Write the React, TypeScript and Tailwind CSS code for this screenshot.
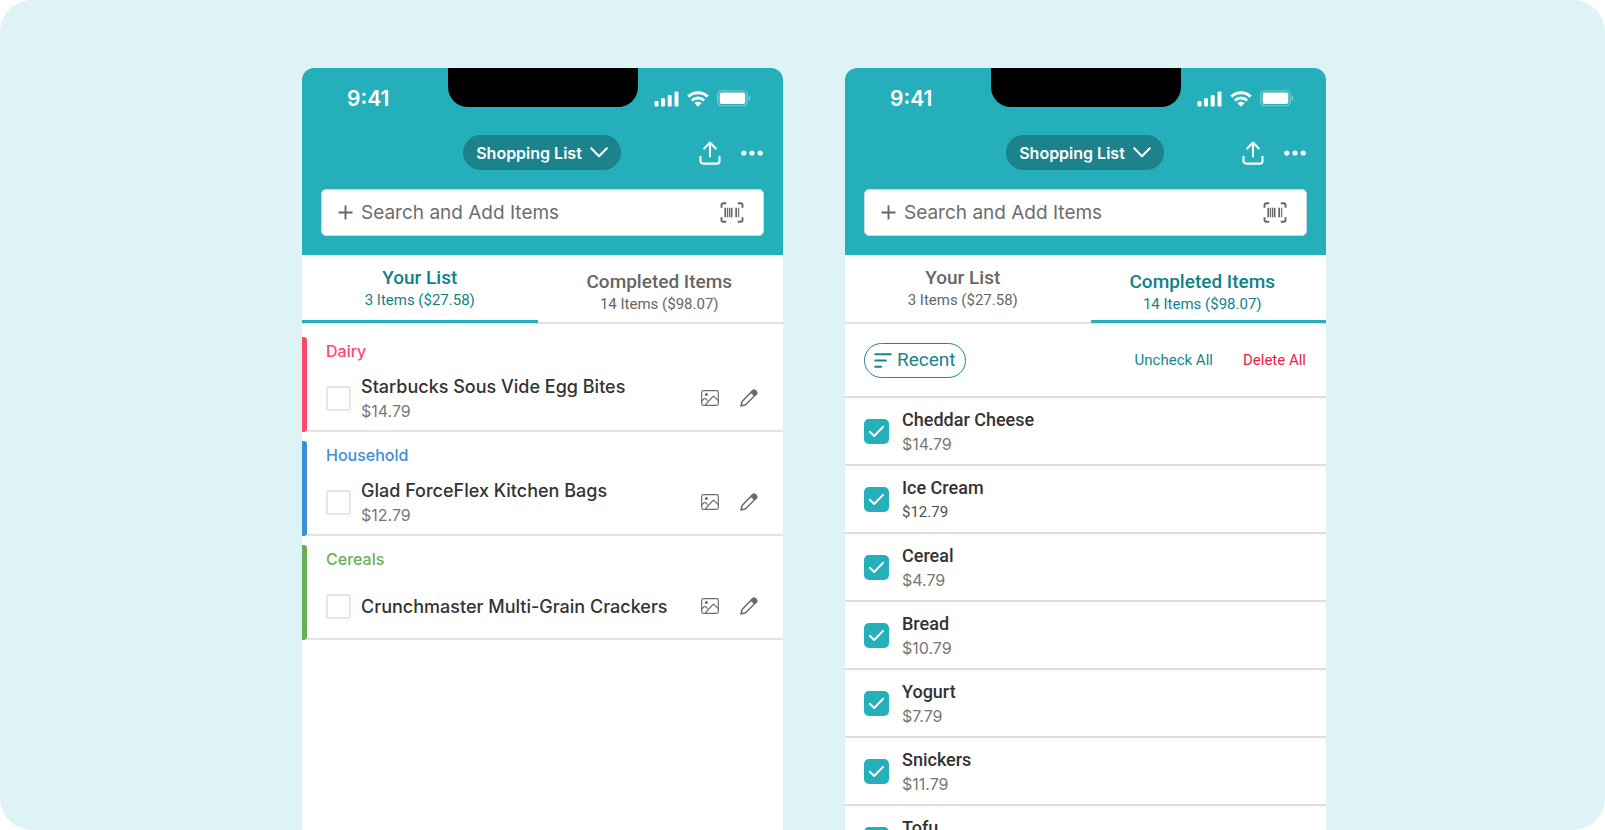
import React from "react";

const heading = "font-['Inter',sans-serif]";
const body = "font-['Roboto',sans-serif]";

function SignalIcon() {
  return (
    <svg width="25" height="16" viewBox="0 0 25 16" fill="white" aria-hidden="true">
      <rect x="0.5" y="10" width="4" height="5.5" rx="1" />
      <rect x="7" y="7.2" width="4" height="8.3" rx="1" />
      <rect x="13.7" y="4" width="4" height="11.5" rx="1" />
      <rect x="20.5" y="0.5" width="4" height="15" rx="1" />
    </svg>
  );
}

function WifiIcon() {
  return (
    <svg width="22" height="16" viewBox="0 0 22 16" fill="none" stroke="white" strokeWidth="2.9" aria-hidden="true">
      <path d="M1.3 5.6C6.7 0.4 15.3 0.4 20.7 5.6" />
      <path d="M4.8 9.5C8.3 6.1 13.7 6.1 17.2 9.5" />
      <path d="M11 15.7L7.4 12.1C9.5 10.2 12.5 10.2 14.6 12.1Z" fill="white" stroke="none" />
    </svg>
  );
}

function BatteryIcon() {
  return (
    <svg width="34" height="17" viewBox="0 0 34 17" aria-hidden="true">
      <rect x="0.75" y="0.75" width="29.5" height="15" rx="4" fill="none" stroke="white" strokeOpacity="0.4" strokeWidth="1.2" />
      <rect x="2.7" y="2.5" width="25.6" height="11.5" rx="2" fill="white" />
      <path d="M31.8 5.8C33.6 6.6 33.6 9.9 31.8 10.7Z" fill="white" fillOpacity="0.5" />
    </svg>
  );
}

function ShareIcon() {
  return (
    <svg width="22" height="24" viewBox="0 0 22 24" fill="none" stroke="white" strokeWidth="2.1" strokeLinecap="round" strokeLinejoin="round" aria-hidden="true">
      <path d="M11 15.5V1.8M5.2 7.4L11 1.5L16.8 7.4" />
      <path d="M1.5 15.8V20A2.6 2.6 0 0 0 4.1 22.6H17.9A2.6 2.6 0 0 0 20.5 20V15.8" />
    </svg>
  );
}

function DotsIcon() {
  return (
    <svg width="22" height="6" viewBox="0 0 22 6" fill="white" aria-hidden="true">
      <circle cx="2.8" cy="3" r="2.6" />
      <circle cx="11" cy="3" r="2.6" />
      <circle cx="19.2" cy="3" r="2.6" />
    </svg>
  );
}

function BarcodeIcon() {
  return (
    <svg width="24" height="21" viewBox="0 0 24 21" fill="none" stroke="#666" aria-hidden="true">
      <path d="M1.5 5.8V3Q1.5 1.2 3.3 1.2H6.2M17.8 1.2H20.7Q22.5 1.2 22.5 3V5.8M22.5 15.2V18Q22.5 19.8 20.7 19.8H17.8M6.2 19.8H3.3Q1.5 19.8 1.5 18V15.2" strokeWidth="1.9" />
      <path d="M5.3 5.8V15.2M11.6 5.8V15.2M16.2 5.8V15.2" strokeWidth="1.8" />
      <path d="M7.6 5.8V15.2M9.5 5.8V15.2M18.7 5.8V15.2" strokeWidth="1.1" />
    </svg>
  );
}

function ImageIcon() {
  return (
    <svg width="18" height="16" viewBox="0 0 18 16" fill="none" stroke="#6f6f6f" strokeWidth="1.2" strokeLinejoin="round" aria-hidden="true">
      <rect x="0.7" y="0.7" width="16.6" height="14.6" rx="1.8" />
      <circle cx="5.4" cy="4.4" r="1.5" fill="#6f6f6f" stroke="none" />
      <path d="M0.8 10.8L3.2 8.8Q4 8.2 4.8 8.8L6.8 10.6M4.2 15L11.6 6.8Q12.5 6 13.4 6.8L17.2 10.6" />
    </svg>
  );
}

function PencilIcon() {
  return (
    <svg width="18" height="18" viewBox="0 0 18 18" fill="none" stroke="#6a6a6a" strokeWidth="1.5" strokeLinejoin="round" aria-hidden="true">
      <path d="M1 17L2.2 12.3L12.6 1.9Q14 0.6 15.6 2.2Q17.3 3.9 16 5.3L5.6 15.7Z" />
      <path d="M11.2 3.3L12.8 1.7Q14.2 0.6 15.8 2.1Q17.4 3.8 16.2 5.2L14.6 6.8Z" fill="#6a6a6a" />
    </svg>
  );
}

function Header() {
  return (
    <header className={`${heading} bg-[#24afbb] pb-[19px] text-white`}>
      <div className="grid h-[67px] grid-cols-[1fr_190px_1fr] items-start">
        <div className="pt-[19px] pl-[45px] text-[21px] leading-6 font-semibold">9:41</div>
        <div className="h-[39px] rounded-b-[20px] bg-black" />
        <div className="flex items-center justify-end gap-2 pt-[22px] pr-[32px]">
          <SignalIcon />
          <WifiIcon />
          <BatteryIcon />
        </div>
      </div>
      <div className="grid grid-cols-[1fr_auto_1fr] items-center pr-5 pl-[19px]">
        <div />
        <button type="button" className="flex h-[35px] items-center gap-2 rounded-full bg-[#1c838b] px-[13px] text-[16px] leading-5 font-semibold">
          Shopping List
          <svg width="18" height="11" viewBox="0 0 18 11" fill="none" stroke="white" strokeWidth="2" strokeLinecap="round" strokeLinejoin="round" aria-hidden="true">
            <path d="M1.2 1.3L9 9.3L16.8 1.3" />
          </svg>
        </button>
        <div className="flex items-center justify-end gap-5">
          <button type="button" aria-label="Share"><ShareIcon /></button>
          <button type="button" aria-label="More options"><DotsIcon /></button>
        </div>
      </div>
      <div className="mx-[19px] mt-[19px] flex h-[47px] items-center rounded-[5px] border border-[#c9dcde] bg-white pr-[19px] pl-4">
        <svg width="15" height="15" viewBox="0 0 15 15" stroke="#666" strokeWidth="1.9" aria-hidden="true">
          <path d="M0.5 7.5H14.5M7.5 0.5V14.5" />
        </svg>
        <input
          type="text"
          aria-label="Search and Add Items"
          placeholder="Search and Add Items"
          className="ml-2 min-w-0 flex-1 text-[19px] leading-6 text-[#444] outline-none placeholder:text-[#6d6d6d]"
        />
        <button type="button" aria-label="Scan barcode"><BarcodeIcon /></button>
      </div>
    </header>
  );
}

function Tabs({ active }: { active: "list" | "completed" }) {
  const on = "border-[#24afbb] text-[#0f8288]";
  const off = "border-transparent text-[#666]";
  return (
    <div role="tablist" className={`${body} grid h-[69px] grid-cols-2 gap-[10px] border-b-2 border-[#e0e0e0]`}>
      <button
        type="button"
        role="tab"
        aria-selected={active === "list"}
        className={`-mb-px flex flex-col items-center border-b-3 pt-[11px] ${active === "list" ? on : off}`}
      >
        <span className="text-[19px] leading-6 font-medium">Your List</span>
        <span className="text-[15px] leading-5">3 Items ($27.58)</span>
      </button>
      <button
        type="button"
        role="tab"
        aria-selected={active === "completed"}
        className={`-mb-px flex flex-col items-center border-b-3 pt-[15px] pr-3 ${active === "completed" ? on : off}`}
      >
        <span className="text-[19px] leading-6 font-medium">Completed Items</span>
        <span className="text-[15px] leading-5">14 Items ($98.07)</span>
      </button>
    </div>
  );
}

const groups = [
  { title: "Dairy", bar: "bg-[#ff476b]", text: "text-[#ff476b]", name: "Starbucks Sous Vide Egg Bites", price: "$14.79" },
  { title: "Household", bar: "bg-[#3e8fd6]", text: "text-[#3e8fd6]", name: "Glad ForceFlex Kitchen Bags", price: "$12.79" },
  { title: "Cereals", bar: "bg-[#6aaf57]", text: "text-[#6aaf57]", name: "Crunchmaster Multi-Grain Crackers", price: "" },
];

function YourList() {
  return (
    <div className={`${heading} flex flex-col gap-[9px] pt-[13px]`}>
      {groups.map((g) => (
        <section key={g.title} className="flex h-[95px]">
          <div className={`w-[5px] rounded-r-[3px] ${g.bar}`} />
          <div className="flex-1 border-b-2 border-[#e3e3e3] pr-[25px] pl-[19px]">
            <h2 className={`pt-1 text-[16px] leading-5 font-medium ${g.text}`}>{g.title}</h2>
            <div className="mt-[13px] flex h-12 items-center">
              <input id={g.title} type="checkbox" className="size-[25px] appearance-none rounded-[2px] border-2 border-[#e6e6e6]" />
              <label htmlFor={g.title} className="ml-[10px] flex-1 pt-[2px]">
                <span className="block text-[18px] leading-6 font-medium text-[#333]">{g.name}</span>
                {g.price && <span className="block text-[16px] leading-6 text-[#777]">{g.price}</span>}
              </label>
              <button type="button" aria-label={`Photo of ${g.name}`}><ImageIcon /></button>
              <button type="button" aria-label={`Edit ${g.name}`} className="ml-[21px]"><PencilIcon /></button>
            </div>
          </div>
        </section>
      ))}
    </div>
  );
}

const regularPrice = "font-['Inter',sans-serif] text-[16px] text-[#777]";
const darkPrice = "font-['Roboto',sans-serif] text-[15px] text-[#505050]";

const done = [
  { name: "Cheddar Cheese", price: "$14.79", style: regularPrice },
  { name: "Ice Cream", price: "$12.79", style: darkPrice },
  { name: "Cereal", price: "$4.79", style: regularPrice },
  { name: "Bread", price: "$10.79", style: regularPrice },
  { name: "Yogurt", price: "$7.79", style: regularPrice },
  { name: "Snickers", price: "$11.79", style: regularPrice },
  { name: "Tofu", price: "$3.79", style: regularPrice },
];

function CompletedItems() {
  return (
    <div className={body}>
      <div className="flex h-[74px] items-center justify-between border-b-2 border-[#dedede] pr-5 pl-[19px]">
        <button type="button" className="flex h-[35px] items-center gap-[5px] rounded-full border border-[#1c8990] px-[9px] text-[19px] leading-6 text-[#17868d]">
          <svg width="18" height="15" viewBox="0 0 18 15" stroke="#17868d" strokeWidth="1.9" strokeLinecap="round" aria-hidden="true">
            <path d="M1.2 1.2H16.8M1.2 7.5H12M1.2 13.8H7.2" />
          </svg>
          Recent
        </button>
        <div className="flex gap-[30px] text-[15px] leading-5">
          <button type="button" className="text-[#17868d]">Uncheck All</button>
          <button type="button" className="text-[#ee1c4a]">Delete All</button>
        </div>
      </div>
      <ul>
        {done.map((d) => (
          <li key={d.name} className="flex h-[68px] items-center border-b-2 border-[#dedede] pl-[19px]">
            <span className="grid">
              <input id={d.name} type="checkbox" defaultChecked className="col-start-1 row-start-1 size-[25px] appearance-none rounded-[5px] bg-[#24afbb]" />
              <svg width="25" height="25" viewBox="0 0 25 25" fill="none" stroke="white" strokeWidth="1.9" strokeLinecap="round" strokeLinejoin="round" className="pointer-events-none col-start-1 row-start-1" aria-hidden="true">
                <path d="M5.8 12.7L10.2 17L19 7.8" />
              </svg>
            </span>
            <label htmlFor={d.name} className="ml-[13px] pt-[2px]">
              <span className="block text-[18px] leading-6 font-medium text-[#333]">{d.name}</span>
              <span className={`block leading-6 ${d.style}`}>{d.price}</span>
            </label>
          </li>
        ))}
      </ul>
    </div>
  );
}

function Phone({ active, children }: { active: "list" | "completed"; children: React.ReactNode }) {
  return (
    <section className="min-w-0 flex-1 overflow-hidden rounded-t-[12px] bg-white">
      <Header />
      <Tabs active={active} />
      {children}
    </section>
  );
}

export default function App() {
  return (
    <div className="bg-white">
      <main className="h-screen overflow-hidden rounded-[32px] bg-[#ddf3f6] pt-[68px]">
        <div className="mx-auto flex h-full w-full max-w-[1047px] gap-[62px] pl-[23px]">
          <Phone active="list"><YourList /></Phone>
          <Phone active="completed"><CompletedItems /></Phone>
        </div>
      </main>
    </div>
  );
}
